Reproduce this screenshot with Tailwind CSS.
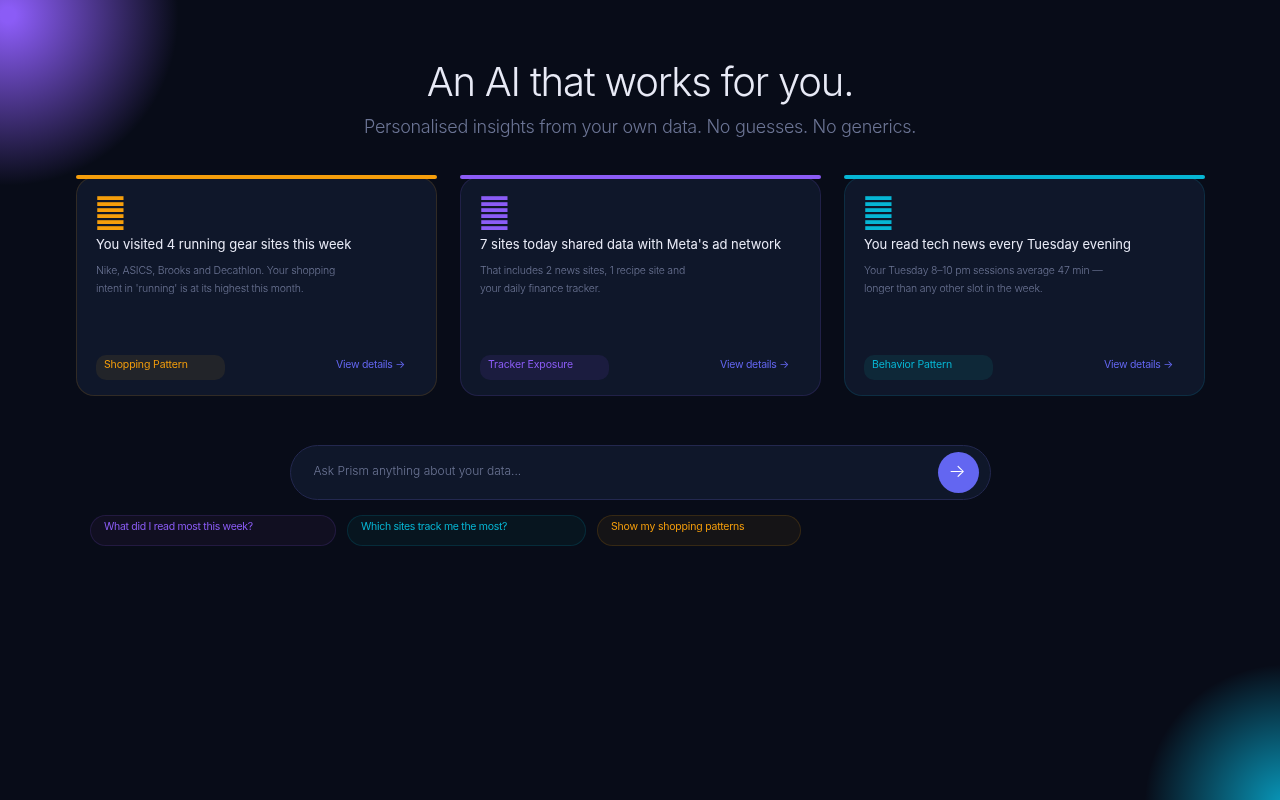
<!DOCTYPE html>
<html lang="en">
<head>
<meta charset="utf-8">
<title>Prism</title>
<script src="https://cdn.jsdelivr.net/npm/@tailwindcss/browser@4"></script>
</head>
<body class="bg-[#080c18] font-['Inter',sans-serif] overflow-hidden">
<div class="relative w-[1280px] h-[800px] overflow-hidden">
  <div class="absolute left-[-172px] top-[-165px] w-[360px] h-[360px] rounded-full bg-[radial-gradient(circle,#8b5cf6_0%,#8b5cf6_3%,transparent_67%)]"></div>
  <div class="absolute left-[1145px] top-[665px] w-[280px] h-[280px] rounded-full bg-[radial-gradient(circle,#0891b2_0%,#0891b2_4%,transparent_71%)]"></div>
  <main class="relative flex flex-col items-center pt-[56px] [will-change:transform]">
    <h1 class="text-[40px] leading-[52px] font-light tracking-[-0.03em] text-[#e8eaf6]">An AI that works for you.</h1>
    <p class="mt-[7px] text-[18px] leading-[24px] font-light tracking-[-0.3px] text-[#6b7494]">Personalised insights from your own data. No guesses. No generics.</p>
    <section class="mt-[38px] flex gap-[23px] w-[1129px]">
      <article class="relative w-[361px] h-[219px] rounded-[18px] bg-[#0f172a] border border-[#f59e0b]/15 px-[19.5px] pt-[18px] flex flex-col">
        <div class="absolute left-[-1px] right-[-1px] top-[-3px] h-[4px] rounded-[2px] bg-[#f59e0b]"></div>
        <svg class="ml-[1px] text-[#f59e0b]" width="27" height="35" viewBox="0 0 27 35" fill="currentColor"><rect x="0.25" y="0.2" width="26.25" height="3.8"/><rect x="0.25" y="6.2" width="26.25" height="3.8"/><rect x="0.25" y="12.2" width="26.25" height="3.8"/><rect x="0.25" y="18.2" width="26.25" height="3.8"/><rect x="0.25" y="24.2" width="26.25" height="3.8"/><rect x="0.25" y="30.2" width="26.25" height="3.8"/></svg>
        <h2 class="mt-[4px] text-[13px] leading-[18px] text-[#e8eaf6]">You visited 4 running gear sites this week</h2>
        <p class="mt-[9px] text-[10.5px] leading-[18px] font-light tracking-[-0.2px] text-[#6b7494]">Nike, ASICS, Brooks and Decathlon. Your shopping<br>intent in 'running' is at its highest this month.</p>
        <div class="mt-auto mb-[15px] flex justify-between">
          <span class="w-[129px] h-[25px] rounded-[10px] bg-[#222429] px-[8px] text-[10.5px] leading-[19px] tracking-[-0.13px] text-[#f59e0b]">Shopping Pattern</span>
          <a class="mr-[11px] text-[10.5px] leading-[19px] tracking-[-0.28px] text-[#6366f1]">View details →</a>
        </div>
      </article>
      <article class="relative w-[361px] h-[219px] rounded-[18px] bg-[#0f172a] border border-[#8b5cf6]/15 px-[19.5px] pt-[18px] flex flex-col">
        <div class="absolute left-[-1px] right-[-1px] top-[-3px] h-[4px] rounded-[2px] bg-[#8b5cf6]"></div>
        <svg class="ml-[1px] text-[#8b5cf6]" width="27" height="35" viewBox="0 0 27 35" fill="currentColor"><rect x="0.25" y="0.2" width="26.25" height="3.8"/><rect x="0.25" y="6.2" width="26.25" height="3.8"/><rect x="0.25" y="12.2" width="26.25" height="3.8"/><rect x="0.25" y="18.2" width="26.25" height="3.8"/><rect x="0.25" y="24.2" width="26.25" height="3.8"/><rect x="0.25" y="30.2" width="26.25" height="3.8"/></svg>
        <h2 class="mt-[4px] text-[13px] leading-[18px] text-[#e8eaf6]">7 sites today shared data with Meta's ad network</h2>
        <p class="mt-[9px] text-[10.5px] leading-[18px] font-light tracking-[-0.2px] text-[#6b7494]">That includes 2 news sites, 1 recipe site and<br>your daily finance tracker.</p>
        <div class="mt-auto mb-[15px] flex justify-between">
          <span class="w-[129px] h-[25px] rounded-[10px] bg-[#1b1c3f] px-[8px] text-[10.5px] leading-[19px] tracking-[-0.13px] text-[#8b5cf6]">Tracker Exposure</span>
          <a class="mr-[11px] text-[10.5px] leading-[19px] tracking-[-0.28px] text-[#6366f1]">View details →</a>
        </div>
      </article>
      <article class="relative w-[361px] h-[219px] rounded-[18px] bg-[#0f172a] border border-[#06b6d4]/15 px-[19.5px] pt-[18px] flex flex-col">
        <div class="absolute left-[-1px] right-[-1px] top-[-3px] h-[4px] rounded-[2px] bg-[#06b6d4]"></div>
        <svg class="ml-[1px] text-[#06b6d4]" width="27" height="35" viewBox="0 0 27 35" fill="currentColor"><rect x="0.25" y="0.2" width="26.25" height="3.8"/><rect x="0.25" y="6.2" width="26.25" height="3.8"/><rect x="0.25" y="12.2" width="26.25" height="3.8"/><rect x="0.25" y="18.2" width="26.25" height="3.8"/><rect x="0.25" y="24.2" width="26.25" height="3.8"/><rect x="0.25" y="30.2" width="26.25" height="3.8"/></svg>
        <h2 class="mt-[4px] text-[13px] leading-[18px] text-[#e8eaf6]">You read tech news every Tuesday evening</h2>
        <p class="mt-[9px] text-[10.5px] leading-[18px] font-light tracking-[-0.2px] text-[#6b7494]">Your Tuesday 8–10 pm sessions average 47 min —<br>longer than any other slot in the week.</p>
        <div class="mt-auto mb-[15px] flex justify-between">
          <span class="w-[129px] h-[25px] rounded-[10px] bg-[#0e2838] px-[8px] text-[10.5px] leading-[19px] tracking-[-0.13px] text-[#06b6d4]">Behavior Pattern</span>
          <a class="mr-[11px] text-[10.5px] leading-[19px] tracking-[-0.28px] text-[#6366f1]">View details →</a>
        </div>
      </article>
    </section>
    <div class="mt-[49px] w-[701px] h-[55px] rounded-full bg-[#0f172a] border border-[#23284f] flex items-center justify-between pl-[23px] pr-[11px]">
      <span class="text-[12px] font-light text-[#6b7494] -mt-[3px]">Ask Prism anything about your data...</span>
      <button class="w-[41px] h-[41px] rounded-full bg-[#6366f1] flex items-center justify-center text-white text-[18px] leading-[18px] font-light pb-[4px] pr-[2px]">→</button>
    </div>
    <div class="mt-[15px] w-[1100px] flex gap-[11px]">
      <span class="w-[246px] h-[31px] rounded-full bg-[#110f21] border border-[#8b5cf6]/15 pl-[13px] pt-[3px] text-[10.5px] leading-[16px] tracking-[-0.3px] text-[#8b5cf6]">What did I read most this week?</span>
      <span class="w-[239px] h-[31px] rounded-full bg-[#07151f] border border-[#06b6d4]/15 pl-[13px] pt-[3px] text-[10.5px] leading-[16px] tracking-[-0.3px] text-[#06b6d4]">Which sites track me the most?</span>
      <span class="w-[204px] h-[31px] rounded-full bg-[#151416] border border-[#f59e0b]/15 pl-[13px] pt-[3px] text-[10.5px] leading-[16px] tracking-[-0.2px] text-[#f59e0b]">Show my shopping patterns</span>
    </div>
  </main>
</div>
</body>
</html>
